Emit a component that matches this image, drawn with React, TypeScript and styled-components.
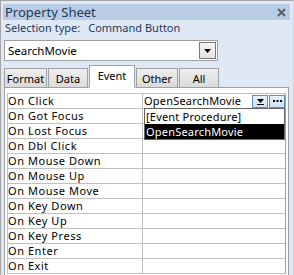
import React from 'react';
import styled, { createGlobalStyle } from 'styled-components';

const GlobalStyle = createGlobalStyle`
    html, body {
        margin: 0;
        padding: 0;
        background: #ffffff;
    }
    * {
        box-sizing: border-box;
    }
`;

const events = [
    'On Click',
    'On Got Focus',
    'On Lost Focus',
    'On Dbl Click',
    'On Mouse Down',
    'On Mouse Up',
    'On Mouse Move',
    'On Key Down',
    'On Key Up',
    'On Key Press',
    'On Enter',
    'On Exit',
];

const tabs = ['Format', 'Data', 'Event', 'Other', 'All'];

export function App() {
    return (
        <>
            <GlobalStyle />
            <Window>
                <TitleBar>
                    <Title>Property Sheet</Title>
                    <CloseIcon width="9" height="9" viewBox="0 0 9 9">
                        <path d="M1 1 L8 8 M8 1 L1 8" stroke="#5a5f66" strokeWidth="2" />
                    </CloseIcon>
                </TitleBar>
                <SelectionLine>
                    <span>Selection type:</span>
                    <span>Command Button</span>
                </SelectionLine>
                <Combo>
                    <ComboText>SearchMovie</ComboText>
                    <ComboButton>
                        <svg width="7" height="4" viewBox="0 0 7 4">
                            <path d="M0 0 H7 L3.5 4 Z" fill="#000" />
                        </svg>
                    </ComboButton>
                </Combo>
                <TabStrip>
                    {tabs.map((t) => (
                        <Tab key={t} $active={t === 'Event'} $width={tabWidths[t]}>
                            {t}
                        </Tab>
                    ))}
                </TabStrip>
                <Page>
                    <Grid>
                        {events.map((name, i) => (
                            <Row key={name}>
                                <Label>{name}</Label>
                                <Value>
                                    {i === 0 && (
                                        <>
                                            <ValueText>OpenSearchMovie</ValueText>
                                            <FieldButton>
                                                <svg width="7" height="7" viewBox="0 0 7 7">
                                                    <path d="M0 1 H7 L3.5 5 Z" fill="#000" />
                                                    <rect x="0" y="6" width="7" height="1" fill="#000" />
                                                </svg>
                                            </FieldButton>
                                            <FieldButton>
                                                <svg width="9" height="3" viewBox="0 0 9 3">
                                                    <rect x="0" y="0" width="2" height="2" fill="#000" />
                                                    <rect x="3.5" y="0" width="2" height="2" fill="#000" />
                                                    <rect x="7" y="0" width="2" height="2" fill="#000" />
                                                </svg>
                                            </FieldButton>
                                        </>
                                    )}
                                </Value>
                            </Row>
                        ))}
                        <DropList>
                            <DropItem>[Event Procedure]</DropItem>
                            <DropItem $selected>OpenSearchMovie</DropItem>
                        </DropList>
                    </Grid>
                </Page>
            </Window>
        </>
    );
}

export default App;

const tabWidths: Record<string, number> = {
    Format: 43,
    Data: 40,
    Event: 46,
    Other: 42,
    All: 40,
};

const uiFont = `"Noto Sans", "Open Sans", "DejaVu Sans", sans-serif`;

const Window = styled.div`
    width: 294px;
    height: 275px;
    overflow: hidden;
    border-top: 1px solid #a5a5a5;
    border-left: 1px solid #a5a5a5;
    border-right: 1px solid #d8d8d8;
    background: #dfe9f5;
    padding: 3px 3px 0 2px;
    font-family: ${uiFont};
    color: #1e395b;
    display: flex;
    flex-direction: column;
`;

const TitleBar = styled.div`
    height: 16px;
    background: #b8cce4;
    display: flex;
    align-items: center;
    justify-content: space-between;
    padding: 0 4px 0 2px;
`;

const Title = styled.div`
    font-size: 13px;
    line-height: 16px;
    color: #1e395b;
`;

const CloseIcon = styled.svg`
    display: block;
`;

const SelectionLine = styled.div`
    display: flex;
    gap: 8px;
    font-size: 11px;
    line-height: 14px;
    padding: 1px 0 0 2px;
    height: 20px;
`;

const Combo = styled.div`
    width: 214px;
    height: 21px;
    margin-left: 1px;
    background: #ffffff;
    border: 1px solid #a0a0a0;
    display: flex;
    align-items: center;
    justify-content: space-between;
    padding: 0 1px 0 3px;
`;

const ComboText = styled.span`
    font-size: 11.5px;
    color: #000;
`;

const ComboButton = styled.div`
    width: 17px;
    height: 17px;
    border: 1px solid #7a7a7a;
    background: linear-gradient(#f4f4f4, #e2e2e2);
    display: flex;
    align-items: center;
    justify-content: center;
`;

const TabStrip = styled.div`
    display: flex;
    align-items: flex-end;
    gap: 1px;
    height: 26px;
    margin-left: 1px;
    position: relative;
    z-index: 1;
`;

const Tab = styled.div<{ $active?: boolean; $width: number }>`
    width: ${(p) => p.$width}px;
    height: ${(p) => (p.$active ? 23 : 20)}px;
    border: 1px solid #a0a0a0;
    border-bottom: ${(p) => (p.$active ? '1px solid #ffffff' : '1px solid #a0a0a0')};
    margin-bottom: -1px;
    background: ${(p) => (p.$active ? '#ffffff' : 'linear-gradient(#eeeeee, #dadada)')};
    font-size: 11px;
    color: #000;
    display: flex;
    align-items: center;
    justify-content: center;
    padding-bottom: ${(p) => (p.$active ? 3 : 0)}px;
`;

const Page = styled.div`
    flex: 1;
    width: 285px;
    margin-left: 1px;
    background: #ffffff;
    border: 1px solid #a0a0a0;
    border-bottom: none;
    padding: 5px 2px 0 2px;
`;

const Grid = styled.div`
    position: relative;
    border-top: 1px solid #c0c0c0;
    border-left: 1px solid #c0c0c0;
    border-right: 1px solid #a0a0a0;
`;

const Row = styled.div`
    display: grid;
    grid-template-columns: 135px 1fr;
    height: 15px;
    border-bottom: 1px solid #c0c0c0;
    color: #000;
    font-size: 11px;
    line-height: 14px;
`;

const Label = styled.div`
    letter-spacing: 0.55px;
    border-right: 1px solid #c0c0c0;
    white-space: nowrap;
`;

const Value = styled.div`
    display: flex;
    align-items: center;
    letter-spacing: 0.2px;
    padding-left: 1px;
    gap: 1px;
`;

const ValueText = styled.span`
    flex: 1;
    white-space: nowrap;
`;

const FieldButton = styled.div`
    width: 16px;
    height: 13px;
    border: 1px solid #5b8fc9;
    background: linear-gradient(#e9f2fc, #cfe1f5);
    display: flex;
    align-items: center;
    justify-content: center;
`;

const DropList = styled.div`
    position: absolute;
    left: 136px;
    right: 0;
    top: 14px;
    border: 1px solid #646464;
    background: #ffffff;
    font-size: 11px;
    letter-spacing: 0.2px;
    color: #000;
`;

const DropItem = styled.div<{ $selected?: boolean }>`
    height: 15px;
    line-height: 15px;
    padding-left: 1px;
    white-space: nowrap;
    background: ${(p) => (p.$selected ? '#000000' : '#ffffff')};
    color: ${(p) => (p.$selected ? '#ffffff' : '#000000')};
`;
